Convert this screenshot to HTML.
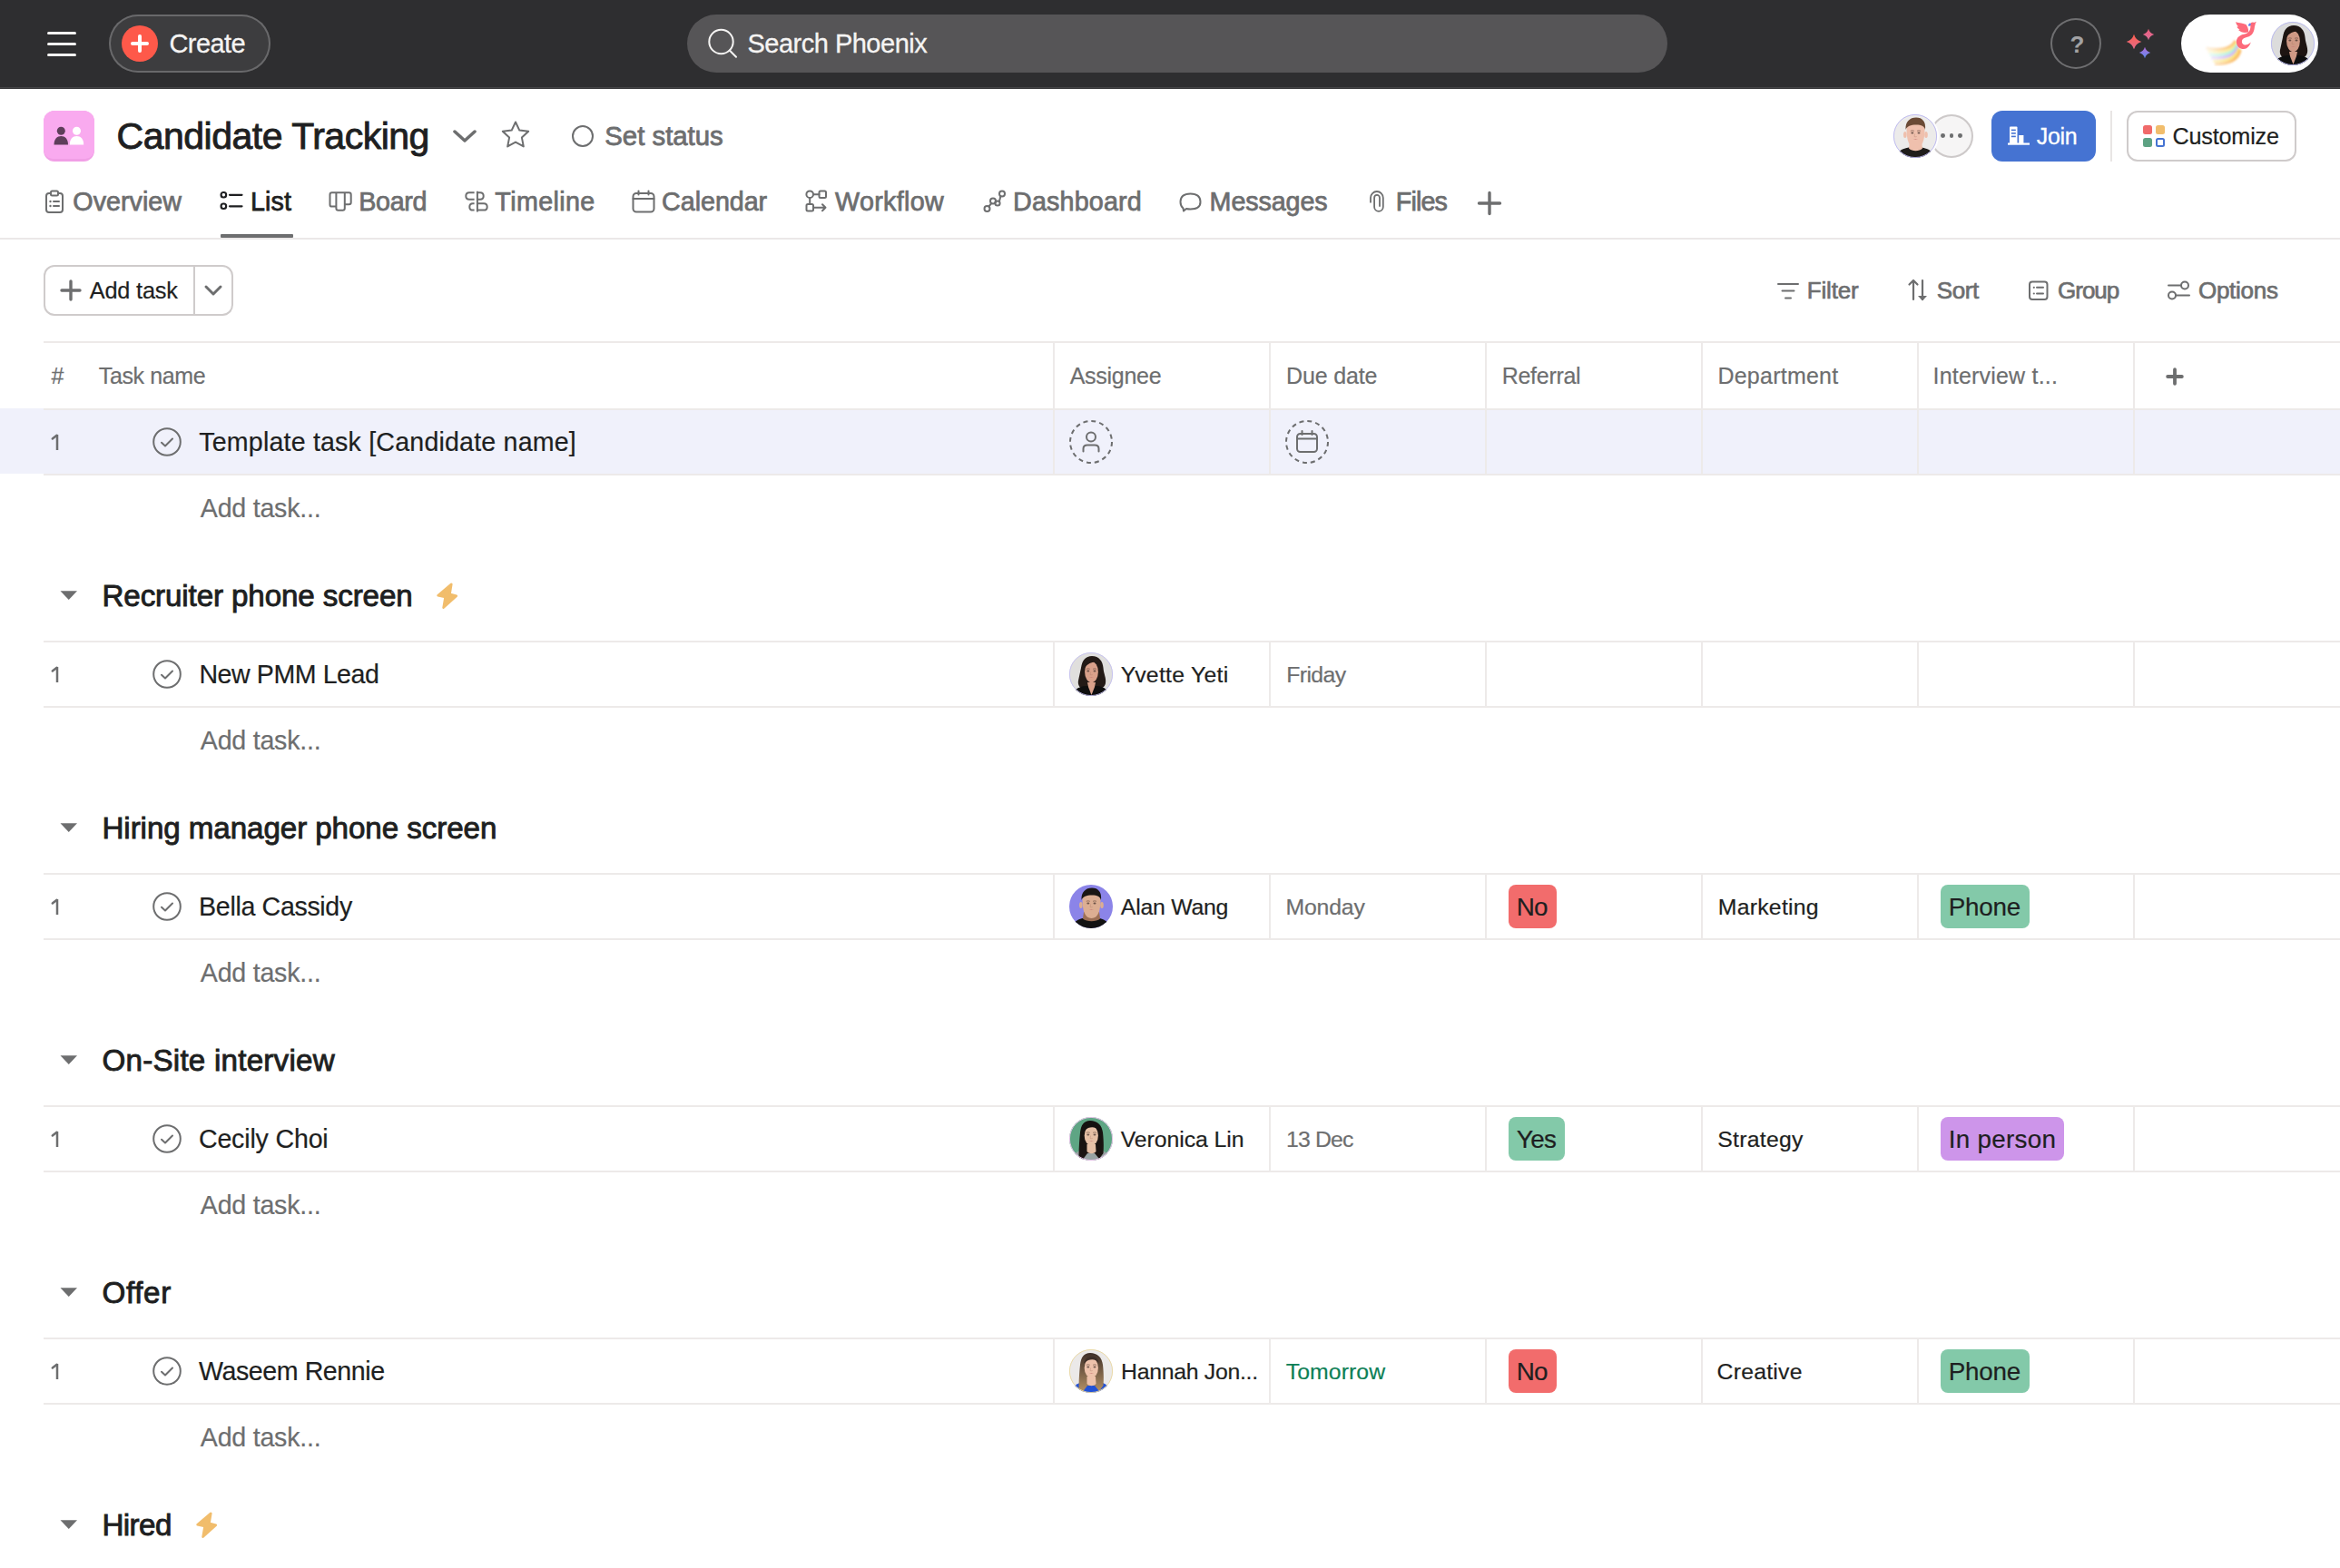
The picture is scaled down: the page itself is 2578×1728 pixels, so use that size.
<!DOCTYPE html><html><head><meta charset="utf-8"><style>
html,body{margin:0;padding:0;width:2578px;height:1728px;overflow:hidden;background:#fff;position:relative}
.t{position:absolute;white-space:nowrap;line-height:1;font-family:"Liberation Sans",sans-serif}
.b{position:absolute;box-sizing:border-box}
.s{position:absolute;overflow:visible}
</style></head><body>
<div class="b" style="left:0.00px;top:0.00px;width:2578.00px;height:96.00px;background:#2e2e30"></div>
<div class="b" style="left:0.00px;top:96.00px;width:2578.00px;height:1.00px;background:#444446"></div>
<div class="b" style="left:0.00px;top:97.00px;width:2578.00px;height:1.00px;background:#363638"></div>
<div class="b" style="left:52.00px;top:34.90px;width:32.00px;height:3.20px;background:#f5f4f3;border-radius:2px"></div>
<div class="b" style="left:52.00px;top:46.80px;width:32.00px;height:3.20px;background:#f5f4f3;border-radius:2px"></div>
<div class="b" style="left:52.00px;top:58.80px;width:32.00px;height:3.20px;background:#f5f4f3;border-radius:2px"></div>
<div class="b" style="left:120.00px;top:16.00px;width:178.00px;height:64.00px;background:#3d3d3f;border-radius:32px;box-shadow:inset 0 0 0 2px #69696b"></div>
<div class="b" style="left:134.00px;top:28.00px;width:40.00px;height:40.00px;background:#fe594a;border-radius:50%"></div>
<div class="b" style="left:144.00px;top:46.00px;width:20.00px;height:4.00px;background:#fff;border-radius:2px"></div>
<div class="b" style="left:152.00px;top:38.00px;width:4.00px;height:20.00px;background:#fff;border-radius:2px"></div>
<div class="t" style="left:186.53px;top:33.75px;font-size:29px;color:#f5f4f3;-webkit-text-stroke:0.3px #f5f4f3;letter-spacing:-0.590px;">Create</div>
<div class="b" style="left:757.00px;top:16.00px;width:1080.00px;height:64.00px;background:#565557;border-radius:32px"></div>
<svg class="s" style="left:778.00px;top:30.00px;" width="36" height="36" viewBox="0 0 36 36"><circle cx="16.5" cy="16" r="13.2" fill="none" stroke="#f5f4f3" stroke-width="2"/><line x1="25.8" y1="25.5" x2="33" y2="32.8" stroke="#f5f4f3" stroke-width="2" stroke-linecap="round"/></svg>
<div class="t" style="left:823.43px;top:33.75px;font-size:29px;color:#f5f4f3;-webkit-text-stroke:0.3px #f5f4f3;letter-spacing:-0.496px;">Search Phoenix</div>
<div class="b" style="left:2259.00px;top:20.00px;width:56.00px;height:56.00px;border-radius:50%;box-shadow:inset 0 0 0 2px #6f6f71"></div>
<div class="t" style="left:2280.50px;top:35.79px;font-size:26px;color:#a2a2a4;font-weight:700;">?</div>
<svg class="s" style="left:2330.00px;top:25.00px;" width="50" height="45" viewBox="0 0 50 45"><defs><linearGradient id="sg1" x1="0" y1="0" x2="0" y2="1"><stop offset="0" stop-color="#fd5f4d"/><stop offset="1" stop-color="#e46b8c"/></linearGradient><linearGradient id="sg2" x1="0" y1="0" x2="0" y2="1"><stop offset="0" stop-color="#ee5c7a"/><stop offset="1" stop-color="#d9709a"/></linearGradient><linearGradient id="sg3" x1="0" y1="0" x2="0" y2="1"><stop offset="0" stop-color="#b56bd8"/><stop offset="1" stop-color="#5b8cf0"/></linearGradient></defs><path d="M21 12.7 Q22.826 19.174 29.3 21 Q22.826 22.826 21 29.3 Q19.174 22.826 12.7 21 Q19.174 19.174 21 12.7Z" fill="url(#sg1)"/><path d="M37 6.8 Q38.364 11.636 43.2 13 Q38.364 14.364 37 19.2 Q35.636 14.364 30.8 13 Q35.636 11.636 37 6.8Z" fill="url(#sg2)"/><path d="M33 26.8 Q34.364 31.636 39.2 33 Q34.364 34.364 33 39.2 Q31.636 34.364 26.8 33 Q31.636 31.636 33 26.8Z" fill="url(#sg3)"/></svg>
<div class="b" style="left:2403.00px;top:16.00px;width:151.00px;height:64.00px;background:#fff;border-radius:32px"></div>
<svg class="s" style="left:2410.00px;top:16.00px;" width="90" height="64" viewBox="0 0 90 64"><defs><linearGradient id="tf" x1="15" y1="0" x2="52" y2="0" gradientUnits="userSpaceOnUse"><stop offset="0" stop-color="#fff" stop-opacity="0"/><stop offset="1" stop-color="#fff" stop-opacity="1"/></linearGradient><filter id="tbl" x="-20%" y="-20%" width="140%" height="140%"><feGaussianBlur stdDeviation="1.1"/></filter><mask id="tm"><rect x="0" y="0" width="90" height="64" fill="url(#tf)"/></mask></defs><g mask="url(#tm)"><g filter="url(#tbl)"><path d="M53.0 29.0 C49.0 37.0 38.0 41.0 20.0 37.0" stroke="#fbbf6e" stroke-width="3.5" fill="none"/><path d="M54.0 31.0 C50.4 39.6 39.4 43.8 22.0 40.5" stroke="#fde88a" stroke-width="3.5" fill="none"/><path d="M55.0 33.0 C51.8 42.2 40.8 46.6 24.0 44.0" stroke="#a9f1da" stroke-width="3.5" fill="none"/><path d="M56.0 35.0 C53.2 44.8 42.2 49.4 26.0 47.5" stroke="#cdb4f6" stroke-width="3.5" fill="none"/><path d="M57.0 37.0 C54.6 47.4 43.6 52.2 28.0 51.0" stroke="#fbe77e" stroke-width="3.5" fill="none"/><path d="M58.0 39.0 C56.0 50.0 45.0 55.0 30.0 54.5" stroke="#fbbf6e" stroke-width="3.5" fill="none"/></g></g><path d="M53 8.2 C57 9.5 62 9.5 64.5 11 C66 13 67.5 16 67 19.5 C63 20.5 59 20 56 17 L57.5 16.5 C55.5 15.5 54.5 14.5 54.5 13.5 L56 13.3 C54.5 12 53.8 10.5 53 8.2Z" fill="#fd6a7a"/><path d="M69.5 12 C69.5 17 68 20.5 62 21.8 C56 23 53.3 27 54 31.5 C54.6 35.5 58 38.2 62 38 C65.5 37.8 68.5 35 69.8 30.5 C67.5 32.8 65 33.8 62.8 33.4 C60.5 33 59.5 31 60 28.8 C60.6 26.6 62.8 25.6 66 24.8 C71 23.5 73.8 19.5 74 12 Z" fill="#fd6a7a"/><circle cx="71.8" cy="11.2" r="2.6" fill="#fd6a7a"/><path d="M72.5 9.2 L75.8 7.8 L74.2 11.2 Z" fill="#fd6a7a"/><ellipse cx="68.4" cy="11.2" rx="1.8" ry="1.1" transform="rotate(-50 68.4 11.2)" fill="#5b7ef0"/></svg>
<svg class="s" style="left:2502.00px;top:24.00px;" width="48" height="48" viewBox="0 0 48 48"><defs><clipPath id="ac1"><circle cx="24" cy="24" r="24"/></clipPath></defs><g clip-path="url(#ac1)"><rect width="48" height="48" fill="#dcdcdc"/><path d="M25 4 C33 4 37 10 37.5 17 C38 24 41 28 40 34 C39 38 36 40 33 40 L16 40 C12 40 9 36 10 31 C11 26 12 22 13 17 C14 9 18 4 25 4Z" fill="#1e1512"/><path d="M2 50 C4 41 10 38 18 37 L31 37 C38 38 44 41 46 50Z" fill="#0e0e0e"/><path d="M20 33 L29 33 L28 38 L24.5 47 L21 38Z" fill="#cf9985"/><ellipse cx="24.5" cy="21.5" rx="7.4" ry="11.5" fill="#cf9985"/><path d="M17 14 C19 9 27 8 32 12 C30 10 22 10 17 17Z" fill="#1e1512"/><ellipse cx="20.799999999999997" cy="20.5" rx="1.5" ry="0.9" fill="#4a3530" opacity="0.75"/><ellipse cx="28.0" cy="20.5" rx="1.5" ry="0.9" fill="#4a3530" opacity="0.75"/><path d="M18.799999999999997 18.3 Q20.799999999999997 17.3 22.799999999999997 18.3 M26.0 18.3 Q28.0 17.3 30.0 18.3" stroke="#5a4035" stroke-width="0.9" fill="none" opacity="0.6"/><path d="M21.4 26.8 Q24.4 29.1 27.4 26.8 Q24.4 27.9 21.4 26.8Z" fill="#c97a78" opacity="0.9"/><path d="M23.599999999999998 21.5 L23.0 24.5 Q24.4 25.1 25.7 24.5" stroke="#b07a66" stroke-width="0.7" fill="none" opacity="0.5"/></g><circle cx="24" cy="24" r="23.6" fill="none" stroke="#b8b8f0" stroke-width="0.9"/></svg>
<div class="b" style="left:48.00px;top:122.00px;width:56.00px;height:56.00px;background:#f19fe6;border-radius:12px"></div>
<div class="b" style="left:48.00px;top:122.00px;width:56.00px;height:53.00px;background:#f9aaef;border-radius:12px 12px 10px 10px"></div>
<svg class="s" style="left:59.00px;top:139.00px;" width="34" height="21" viewBox="0 0 34 21"><circle cx="8.3" cy="5.2" r="4.5" fill="#5e3e5b"/><path d="M0.5 20.5 C0.5 14 4 11 8.3 11 C12.6 11 16 14 16 20.5Z" fill="#5e3e5b"/><circle cx="25.5" cy="5.2" r="4.5" fill="#fff"/><path d="M17.8 20.5 C17.8 14 21.2 11 25.5 11 C29.8 11 33.2 14 33.2 20.5Z" fill="#fff"/></svg>
<div class="t" style="left:128.59px;top:130.29px;font-size:41px;color:#1e1f21;-webkit-text-stroke:0.9px #1e1f21;letter-spacing:-0.497px;">Candidate Tracking</div>
<svg class="s" style="left:498.00px;top:142.00px;" width="28" height="16" viewBox="0 0 28 16"><path d="M3 3 L14 13 L25 3" fill="none" stroke="#6d6e6f" stroke-width="3.5" stroke-linecap="round" stroke-linejoin="round"/></svg>
<svg class="s" style="left:550.00px;top:132.00px;" width="36" height="34" viewBox="0 0 36 34"><path d="M18 2.5 L22.3 11.6 L32.2 12.8 L24.9 19.6 L26.8 29.4 L18 24.6 L9.2 29.4 L11.1 19.6 L3.8 12.8 L13.7 11.6 Z" fill="none" stroke="#6d6e6f" stroke-width="2" stroke-linejoin="round"/></svg>
<svg class="s" style="left:628.00px;top:136.00px;" width="28" height="28" viewBox="0 0 28 28"><circle cx="14" cy="14" r="11" fill="none" stroke="#6d6e6f" stroke-width="2"/></svg>
<div class="t" style="left:666.28px;top:135.11px;font-size:29.4px;color:#6d6e6f;-webkit-text-stroke:0.8px #6d6e6f;letter-spacing:-0.022px;">Set status</div>
<div class="b" style="left:2126.00px;top:126.00px;width:48.00px;height:48.00px;background:#f6f5f5;border-radius:50%;box-shadow:inset 0 0 0 2px #cdc9c9"></div>
<div class="b" style="left:2138.20px;top:147.40px;width:4.80px;height:4.80px;background:#6d6e6f;border-radius:50%"></div>
<div class="b" style="left:2147.60px;top:147.40px;width:4.80px;height:4.80px;background:#6d6e6f;border-radius:50%"></div>
<div class="b" style="left:2157.10px;top:147.40px;width:4.80px;height:4.80px;background:#6d6e6f;border-radius:50%"></div>
<div class="b" style="left:2084.00px;top:124.00px;width:52.00px;height:52.00px;background:#fff;border-radius:50%"></div>
<svg class="s" style="left:2086.00px;top:126.00px;" width="48" height="48" viewBox="0 0 48 48"><defs><clipPath id="ac2"><circle cx="24" cy="24" r="24"/></clipPath></defs><g clip-path="url(#ac2)"><rect width="48" height="48" fill="#ecebea"/><path d="M1 50 C3 41 10 37.5 17 36.5 L31 36.5 C38 37.5 45 41 47 50Z" fill="#1f1d1b"/><path d="M18.0 30 L31.0 30 L32.0 37.5 C28.4 41 20.6 41 17.0  37.5Z" fill="#efc0ad"/><ellipse cx="12.8" cy="22.5" rx="1.8" ry="3.5" fill="#efc0ad"/><ellipse cx="36" cy="22.5" rx="1.8" ry="3.5" fill="#efc0ad"/><path d="M14.5 16 C14.5 28 17 37 24.5 37 C32 37 34.5 28 34.5 16 C34.5 12 30 10 24.5 10 C19 10 14.5 12 14.5 16Z" fill="#efc0ad"/><path d="M13.5 17 C13 8 18 3.5 25 3.5 C32 3.5 36 8 35 17 C34 13 31 11.5 25 11.5 C19 11.5 15 13 13.5 17Z" fill="#6a4a35"/><ellipse cx="20.799999999999997" cy="20.5" rx="1.5" ry="0.9" fill="#4a3530" opacity="0.75"/><ellipse cx="28.0" cy="20.5" rx="1.5" ry="0.9" fill="#4a3530" opacity="0.75"/><path d="M18.799999999999997 18.3 Q20.799999999999997 17.3 22.799999999999997 18.3 M26.0 18.3 Q28.0 17.3 30.0 18.3" stroke="#5a4035" stroke-width="0.9" fill="none" opacity="0.6"/><path d="M21.4 26.8 Q24.4 29.1 27.4 26.8 Q24.4 27.9 21.4 26.8Z" fill="#c97a78" opacity="0.9"/><path d="M23.599999999999998 21.5 L23.0 24.5 Q24.4 25.1 25.7 24.5" stroke="#b07a66" stroke-width="0.7" fill="none" opacity="0.5"/></g><circle cx="24" cy="24" r="23.6" fill="none" stroke="#b9b6f0" stroke-width="0.9"/></svg>
<div class="b" style="left:2194.00px;top:122.00px;width:115.00px;height:56.00px;background:#4573d2;border-radius:12px"></div>
<svg class="s" style="left:2211.00px;top:139.00px;" width="26" height="22" viewBox="0 0 26 22"><path d="M3 1.5 Q3 0.5 4 0.5 L10.5 0.5 Q11.5 0.5 11.5 1.5 L11.5 19 L3 19 Z" fill="#fff"/><rect x="4.8" y="3.6" width="5" height="1.6" fill="#4573d2"/><rect x="4.8" y="7.1" width="5" height="1.6" fill="#4573d2"/><rect x="4.8" y="10.6" width="5" height="1.6" fill="#4573d2"/><rect x="13.2" y="10" width="5.2" height="9" fill="#fff"/><rect x="1" y="18.5" width="24" height="2.2" fill="#fff"/></svg>
<div class="t" style="left:2243.73px;top:138.03px;font-size:25px;color:#ffffff;-webkit-text-stroke:0.3px #ffffff;letter-spacing:-0.283px;">Join</div>
<div class="b" style="left:2325.00px;top:122.00px;width:2.00px;height:56.00px;background:#e8e5e4"></div>
<div class="b" style="left:2343.00px;top:122.00px;width:187.00px;height:56.00px;border-radius:12px;box-shadow:inset 0 0 0 2px #cfcbcb;background:#fff"></div>
<div class="b" style="left:2361.00px;top:138.00px;width:10.00px;height:10.00px;background:#f06a6a;border-radius:2.5px"></div>
<div class="b" style="left:2375.00px;top:138.00px;width:10.00px;height:10.00px;background:#f1bd6c;border-radius:2.5px"></div>
<div class="b" style="left:2361.00px;top:152.00px;width:10.00px;height:10.00px;background:#5da283;border-radius:2.5px"></div>
<div class="b" style="left:2375.00px;top:152.00px;width:10.00px;height:10.00px;border:2px solid #4573d2;border-radius:2.5px"></div>
<div class="t" style="left:2393.42px;top:137.66px;font-size:25.2px;color:#1e1f21;-webkit-text-stroke:0.2px #1e1f21;letter-spacing:-0.175px;">Customize</div>
<svg class="s" style="left:49.00px;top:209.00px;" width="22" height="26" viewBox="0 0 22 26"><rect x="2" y="4" width="18" height="21" rx="3" stroke="#6d6e6f" fill="none" stroke-width="2" stroke-linecap="round" stroke-linejoin="round"/><rect x="7" y="1.5" width="8" height="5" rx="1.5" fill="#fff" stroke="#6d6e6f" fill="none" stroke-width="2" stroke-linecap="round" stroke-linejoin="round"/><circle cx="6.5" cy="13" r="1.2" fill="#6d6e6f"/><circle cx="6.5" cy="18" r="1.2" fill="#6d6e6f"/><line x1="10" y1="13" x2="16" y2="13" stroke="#6d6e6f" fill="none" stroke-width="2" stroke-linecap="round" stroke-linejoin="round"/><line x1="10" y1="18" x2="16" y2="18" stroke="#6d6e6f" fill="none" stroke-width="2" stroke-linecap="round" stroke-linejoin="round"/></svg>
<div class="t" style="left:80.33px;top:207.90px;font-size:28.7px;color:#6d6e6f;-webkit-text-stroke:0.75px #6d6e6f;letter-spacing:0.018px;">Overview</div>
<svg class="s" style="left:242.00px;top:210.00px;" width="27" height="22" viewBox="0 0 27 22"><g stroke="#1e1f21" fill="none" stroke-width="2.2" stroke-linecap="round"><rect x="1.6" y="2" width="5.5" height="5.5" rx="2.5"/><rect x="1.6" y="14.5" width="5.5" height="5.5" rx="2.5"/><line x1="11" y1="4.8" x2="24.5" y2="4.8"/><line x1="11" y1="17.3" x2="24.5" y2="17.3"/></g></svg>
<div class="t" style="left:275.93px;top:207.90px;font-size:28.7px;color:#1e1f21;-webkit-text-stroke:0.75px #1e1f21;letter-spacing:0.108px;">List</div>
<div class="b" style="left:243.00px;top:258.00px;width:80.00px;height:4.00px;background:#6d6e6f;border-radius:1px"></div>
<svg class="s" style="left:362.00px;top:210.00px;" width="26" height="24" viewBox="0 0 26 24"><path d="M1.5 4.5 Q1.5 2.3 3.7 2.3 H22.5 Q24.7 2.3 24.7 4.5 V13 Q24.7 15.2 22.5 15.2 H17.8 V19.5 Q17.8 21.7 15.6 21.7 H10.6 Q8.4 21.7 8.4 19.5 V17.6 H3.7 Q1.5 17.6 1.5 15.4 Z M8.4 2.3 V17.6 M17.8 2.3 V15.2" stroke="#6d6e6f" fill="none" stroke-width="2" stroke-linecap="round" stroke-linejoin="round"/></svg>
<div class="t" style="left:395.32px;top:207.90px;font-size:28.7px;color:#6d6e6f;-webkit-text-stroke:0.75px #6d6e6f;letter-spacing:-0.344px;">Board</div>
<svg class="s" style="left:512.00px;top:210.00px;" width="26" height="26" viewBox="0 0 26 26"><path d="M13.9 0.8 V23.5 M10.6 2.3 H5 Q1.3 2.3 1.3 6 Q1.3 9.7 5 9.7 H10.6 M13.9 2.3 H17 Q20.7 2.3 20.7 6 Q20.7 9.7 17 9.7 H13.9 M10.6 14.2 H9 Q5.3 14.2 5.3 17.9 Q5.3 21.6 9 21.6 H10.6 M13.9 14.2 H21 Q24.7 14.2 24.7 17.9 Q24.7 21.6 21 21.6 H13.9" stroke="#6d6e6f" fill="none" stroke-width="2" stroke-linecap="butt" stroke-linejoin="round"/></svg>
<div class="t" style="left:545.33px;top:207.90px;font-size:28.7px;color:#6d6e6f;-webkit-text-stroke:0.75px #6d6e6f;letter-spacing:0.375px;">Timeline</div>
<svg class="s" style="left:696.00px;top:209.00px;" width="26" height="26" viewBox="0 0 26 26"><rect x="1.5" y="4" width="23" height="20.5" rx="3.5" stroke="#6d6e6f" fill="none" stroke-width="2" stroke-linecap="round" stroke-linejoin="round"/><line x1="1.5" y1="10" x2="24.5" y2="10" stroke="#6d6e6f" fill="none" stroke-width="2" stroke-linecap="round" stroke-linejoin="round"/><line x1="7.5" y1="1.5" x2="7.5" y2="5.5" stroke="#6d6e6f" fill="none" stroke-width="2" stroke-linecap="round" stroke-linejoin="round"/><line x1="18.5" y1="1.5" x2="18.5" y2="5.5" stroke="#6d6e6f" fill="none" stroke-width="2" stroke-linecap="round" stroke-linejoin="round"/></svg>
<div class="t" style="left:729.12px;top:207.90px;font-size:28.7px;color:#6d6e6f;-webkit-text-stroke:0.75px #6d6e6f;letter-spacing:-0.054px;">Calendar</div>
<svg class="s" style="left:887.00px;top:209.00px;" width="26" height="26" viewBox="0 0 26 26"><circle cx="5.2" cy="5.2" r="3.8" stroke="#6d6e6f" fill="none" stroke-width="2" stroke-linecap="round" stroke-linejoin="round"/><rect x="15.5" y="1.5" width="7.5" height="7.5" rx="1.5" stroke="#6d6e6f" fill="none" stroke-width="2" stroke-linecap="round" stroke-linejoin="round"/><rect x="1.5" y="16" width="7.5" height="7.5" rx="1.5" stroke="#6d6e6f" fill="none" stroke-width="2" stroke-linecap="round" stroke-linejoin="round"/><path d="M9 5.2 H15.5 M5.2 9 V16 M9 19.8 H22.5 M19 16.2 L22.5 19.8 L19 23.3" stroke="#6d6e6f" fill="none" stroke-width="2" stroke-linecap="round" stroke-linejoin="round"/></svg>
<div class="t" style="left:920.03px;top:207.90px;font-size:28.7px;color:#6d6e6f;-webkit-text-stroke:0.75px #6d6e6f;letter-spacing:0.332px;">Workflow</div>
<svg class="s" style="left:1083.00px;top:209.00px;" width="26" height="26" viewBox="0 0 26 26"><circle cx="4.5" cy="21" r="3" stroke="#6d6e6f" fill="none" stroke-width="2" stroke-linecap="round" stroke-linejoin="round"/><circle cx="11" cy="12.5" r="3" stroke="#6d6e6f" fill="none" stroke-width="2" stroke-linecap="round" stroke-linejoin="round"/><circle cx="21" cy="4.5" r="3" stroke="#6d6e6f" fill="none" stroke-width="2" stroke-linecap="round" stroke-linejoin="round"/><circle cx="16" cy="15" r="2.6" stroke="#6d6e6f" fill="none" stroke-width="2" stroke-linecap="round" stroke-linejoin="round"/><path d="M6.3 18.6 L9.3 15 M13.8 13.6 L13.6 13.5 M18 12.8 L19.4 7.2 M13.7 13.6 L13.5 13.6" stroke="#6d6e6f" fill="none" stroke-width="2" stroke-linecap="round" stroke-linejoin="round"/></svg>
<div class="t" style="left:1116.12px;top:207.90px;font-size:28.7px;color:#6d6e6f;-webkit-text-stroke:0.75px #6d6e6f;letter-spacing:0.166px;">Dashboard</div>
<svg class="s" style="left:1299.00px;top:210.00px;" width="26" height="26" viewBox="0 0 26 26"><path d="M4.5 19.5 Q1.5 17 1.5 12.5 Q1.5 3.5 12.5 3.5 Q23.5 3.5 23.5 12.5 Q23.5 20.5 12.5 20.5 Q10 20.5 8 20 L5 22.5 Z" stroke="#6d6e6f" fill="none" stroke-width="2" stroke-linecap="round" stroke-linejoin="round"/></svg>
<div class="t" style="left:1332.62px;top:207.90px;font-size:28.7px;color:#6d6e6f;-webkit-text-stroke:0.75px #6d6e6f;letter-spacing:-0.096px;">Messages</div>
<svg class="s" style="left:1507.00px;top:208.00px;" width="20" height="28" viewBox="0 0 20 28"><path d="M3 15.6 V9.9 A6.9 6.9 0 0 1 16.8 9.9 V20 A4.85 4.85 0 0 1 7.1 20 V9.9 A2.95 2.95 0 0 1 13 9.9 V19.7" stroke="#6d6e6f" fill="none" stroke-width="1.8" stroke-linecap="butt"/></svg>
<div class="t" style="left:1537.83px;top:207.90px;font-size:28.7px;color:#6d6e6f;-webkit-text-stroke:0.75px #6d6e6f;letter-spacing:-0.894px;">Files</div>
<svg class="s" style="left:1627.00px;top:210.00px;" width="28" height="28" viewBox="0 0 28 28"><path d="M14 2.5 V25.5 M2.5 14 H25.5" stroke="#6d6e6f" stroke-width="3.4" stroke-linecap="round"/></svg>
<div class="b" style="left:0.00px;top:262.00px;width:2578.00px;height:2.00px;background:#ebe8e8"></div>
<div class="b" style="left:48.00px;top:292.00px;width:209.00px;height:56.00px;border-radius:12px;box-shadow:inset 0 0 0 2px #cfcbcb"></div>
<div class="b" style="left:213.00px;top:292.00px;width:2.00px;height:56.00px;background:#cfcbcb"></div>
<svg class="s" style="left:66.00px;top:308.00px;" width="24" height="24" viewBox="0 0 24 24"><path d="M12 2 V22 M2 12 H22" stroke="#6d6e6f" stroke-width="3.4" stroke-linecap="round"/></svg>
<div class="t" style="left:98.82px;top:307.58px;font-size:25.3px;color:#1e1f21;-webkit-text-stroke:0.2px #1e1f21;letter-spacing:-0.200px;">Add task</div>
<svg class="s" style="left:224.00px;top:313.00px;" width="22" height="14" viewBox="0 0 22 14"><path d="M3 3 L11 11 L19 3" fill="none" stroke="#6d6e6f" stroke-width="3" stroke-linecap="round" stroke-linejoin="round"/></svg>
<svg class="s" style="left:1956.00px;top:310.00px;" width="28" height="22" viewBox="0 0 28 22"><path d="M3 3 H25 M7.5 10.5 H20.5 M11 18.5 H17" stroke="#6d6e6f" fill="none" stroke-width="2" stroke-linecap="round" stroke-linejoin="round"/></svg>
<div class="t" style="left:1990.67px;top:307.49px;font-size:26px;color:#6d6e6f;-webkit-text-stroke:0.7px #6d6e6f;letter-spacing:-0.130px;">Filter</div>
<svg class="s" style="left:2101.00px;top:306.00px;" width="24" height="28" viewBox="0 0 24 28"><g stroke="#6d6e6f" fill="none" stroke-width="2.2" stroke-linecap="round" stroke-linejoin="round"><path d="M7 24 V3 M2.5 7.5 L7 3 L11.5 7.5"/><path d="M17 3 V24"/></g><path d="M12 20 L17 25.5 L22 20 Z" fill="#6d6e6f"/></svg>
<div class="t" style="left:2133.77px;top:307.49px;font-size:26px;color:#6d6e6f;-webkit-text-stroke:0.7px #6d6e6f;letter-spacing:-0.417px;">Sort</div>
<svg class="s" style="left:2234.00px;top:308.00px;" width="24" height="24" viewBox="0 0 24 24"><rect x="2" y="2.5" width="19.5" height="19.5" rx="3" stroke="#6d6e6f" fill="none" stroke-width="2" stroke-linecap="round" stroke-linejoin="round"/><circle cx="6.8" cy="8.8" r="1.1" fill="#6d6e6f"/><circle cx="6.8" cy="15.5" r="1.1" fill="#6d6e6f"/><line x1="10" y1="8.8" x2="17" y2="8.8" stroke="#6d6e6f" fill="none" stroke-width="2" stroke-linecap="round" stroke-linejoin="round"/><line x1="10" y1="15.5" x2="17" y2="15.5" stroke="#6d6e6f" fill="none" stroke-width="2" stroke-linecap="round" stroke-linejoin="round"/></svg>
<div class="t" style="left:2267.07px;top:307.49px;font-size:26px;color:#6d6e6f;-webkit-text-stroke:0.7px #6d6e6f;letter-spacing:-1.012px;">Group</div>
<svg class="s" style="left:2387.00px;top:308.00px;" width="28" height="24" viewBox="0 0 28 24"><circle cx="20" cy="6.5" r="4" stroke="#6d6e6f" fill="none" stroke-width="2" stroke-linecap="round" stroke-linejoin="round"/><circle cx="6" cy="17.5" r="4" stroke="#6d6e6f" fill="none" stroke-width="2" stroke-linecap="round" stroke-linejoin="round"/><line x1="2" y1="6.5" x2="16" y2="6.5" stroke="#6d6e6f" fill="none" stroke-width="2" stroke-linecap="round" stroke-linejoin="round"/><line x1="10" y1="17.5" x2="25" y2="17.5" stroke="#6d6e6f" fill="none" stroke-width="2" stroke-linecap="round" stroke-linejoin="round"/></svg>
<div class="t" style="left:2421.97px;top:307.49px;font-size:26px;color:#6d6e6f;-webkit-text-stroke:0.7px #6d6e6f;letter-spacing:-0.275px;">Options</div>
<div class="b" style="left:48.00px;top:376.00px;width:2530.00px;height:2.00px;background:#edeae9"></div>
<div class="b" style="left:1160.00px;top:377.00px;width:2.00px;height:74.00px;background:#edeae9"></div>
<div class="b" style="left:1398.00px;top:377.00px;width:2.00px;height:74.00px;background:#edeae9"></div>
<div class="b" style="left:1636.00px;top:377.00px;width:2.00px;height:74.00px;background:#edeae9"></div>
<div class="b" style="left:1874.00px;top:377.00px;width:2.00px;height:74.00px;background:#edeae9"></div>
<div class="b" style="left:2112.00px;top:377.00px;width:2.00px;height:74.00px;background:#edeae9"></div>
<div class="b" style="left:2350.00px;top:377.00px;width:2.00px;height:74.00px;background:#edeae9"></div>
<div class="t" style="left:56.40px;top:401.83px;font-size:25px;color:#6d6e6f;-webkit-text-stroke:0.2px #6d6e6f;">#</div>
<div class="t" style="left:108.82px;top:401.83px;font-size:25px;color:#6d6e6f;-webkit-text-stroke:0.2px #6d6e6f;letter-spacing:-0.387px;">Task name</div>
<div class="t" style="left:1178.72px;top:401.83px;font-size:25px;color:#6d6e6f;-webkit-text-stroke:0.2px #6d6e6f;letter-spacing:-0.286px;">Assignee</div>
<div class="t" style="left:1417.12px;top:401.83px;font-size:25px;color:#6d6e6f;-webkit-text-stroke:0.2px #6d6e6f;letter-spacing:-0.157px;">Due date</div>
<div class="t" style="left:1654.72px;top:401.83px;font-size:25px;color:#6d6e6f;-webkit-text-stroke:0.2px #6d6e6f;letter-spacing:-0.286px;">Referral</div>
<div class="t" style="left:1892.42px;top:401.83px;font-size:25px;color:#6d6e6f;-webkit-text-stroke:0.2px #6d6e6f;letter-spacing:0.244px;">Department</div>
<div class="t" style="left:2129.52px;top:401.83px;font-size:25px;color:#6d6e6f;-webkit-text-stroke:0.2px #6d6e6f;letter-spacing:0.200px;">Interview t...</div>
<svg class="s" style="left:2383.50px;top:402.50px;" width="24" height="24" viewBox="0 0 24 24"><path d="M12 4.15 V19.85 M4.15 12 H19.85" stroke="#6d6e6f" stroke-width="3.8" stroke-linecap="round"/></svg>
<div class="b" style="left:0.00px;top:450.00px;width:2578.00px;height:72.00px;background:#f0f1fb"></div>
<div class="b" style="left:48.00px;top:450.00px;width:2530.00px;height:2.00px;background:#edeae9"></div>
<div class="b" style="left:48.00px;top:522.00px;width:2530.00px;height:2.00px;background:#edeae9"></div>
<div class="b" style="left:1160.00px;top:451.00px;width:2.00px;height:72.00px;background:#edeae9"></div>
<div class="b" style="left:1398.00px;top:451.00px;width:2.00px;height:72.00px;background:#edeae9"></div>
<div class="b" style="left:1636.00px;top:451.00px;width:2.00px;height:72.00px;background:#edeae9"></div>
<div class="b" style="left:1874.00px;top:451.00px;width:2.00px;height:72.00px;background:#edeae9"></div>
<div class="b" style="left:2112.00px;top:451.00px;width:2.00px;height:72.00px;background:#edeae9"></div>
<div class="b" style="left:2350.00px;top:451.00px;width:2.00px;height:72.00px;background:#edeae9"></div>
<svg class="s" style="left:55.00px;top:477.00px;" width="12" height="21" viewBox="0 0 12 21"><path d="M8 2 V19" stroke="#6d6e6f" stroke-width="2.5"/><path d="M2.8 6.4 L7.6 2.8" stroke="#6d6e6f" stroke-width="2.5" stroke-linecap="round"/></svg>
<svg class="s" style="left:167.00px;top:470.00px;" width="34" height="34" viewBox="0 0 34 34"><circle cx="17" cy="17" r="14.8" fill="none" stroke="#6d6e6f" stroke-width="2"/><path d="M11 17.8 L15 21.5 L23 13.5" fill="none" stroke="#6d6e6f" stroke-width="2" stroke-linecap="round" stroke-linejoin="round"/></svg>
<div class="t" style="left:220.82px;top:545.98px;font-size:28.6px;color:#6d6e6f;-webkit-text-stroke:0.2px #6d6e6f;letter-spacing:-0.230px;">Add task...</div>
<div class="t" style="left:219.22px;top:472.98px;font-size:28.6px;color:#1e1f21;-webkit-text-stroke:0.2px #1e1f21;letter-spacing:0.190px;">Template task [Candidate name]</div>
<svg class="s" style="left:1177.00px;top:462.00px;" width="50" height="50" viewBox="0 0 50 50"><circle cx="25" cy="25" r="23" fill="none" stroke="#6d6e6f" stroke-width="2" stroke-dasharray="5 4"/><circle cx="25" cy="19.5" r="5" fill="none" stroke="#6d6e6f" stroke-width="2"/><path d="M16.5 35.5 V32.5 Q16.5 28.5 21 28.5 H29 Q33.5 28.5 33.5 32.5 V35.5" fill="none" stroke="#6d6e6f" stroke-width="2" stroke-linecap="round"/></svg>
<svg class="s" style="left:1415.00px;top:462.00px;" width="50" height="50" viewBox="0 0 50 50"><circle cx="25" cy="25" r="23" fill="none" stroke="#6d6e6f" stroke-width="2" stroke-dasharray="5 4"/><rect x="14" y="16" width="22" height="20" rx="3.5" fill="none" stroke="#6d6e6f" stroke-width="2"/><line x1="14" y1="21.5" x2="36" y2="21.5" stroke="#6d6e6f" stroke-width="2"/><line x1="19.5" y1="13" x2="19.5" y2="17" stroke="#6d6e6f" stroke-width="2" stroke-linecap="round"/><line x1="30.5" y1="13" x2="30.5" y2="17" stroke="#6d6e6f" stroke-width="2" stroke-linecap="round"/></svg>
<svg class="s" style="left:65.00px;top:649.00px;" width="22" height="14" viewBox="0 0 22 14"><path d="M1.5 2.2 H20 L10.75 12 Z" fill="#6d6e6f"/></svg>
<div class="t" style="left:112.49px;top:639.89px;font-size:33.2px;color:#1e1f21;-webkit-text-stroke:0.9px #1e1f21;letter-spacing:-0.131px;">Recruiter phone screen</div>
<div class="b" style="left:48.00px;top:706.00px;width:2530.00px;height:2.00px;background:#edeae9"></div>
<div class="b" style="left:48.00px;top:778.00px;width:2530.00px;height:2.00px;background:#edeae9"></div>
<div class="b" style="left:1160.00px;top:707.00px;width:2.00px;height:72.00px;background:#edeae9"></div>
<div class="b" style="left:1398.00px;top:707.00px;width:2.00px;height:72.00px;background:#edeae9"></div>
<div class="b" style="left:1636.00px;top:707.00px;width:2.00px;height:72.00px;background:#edeae9"></div>
<div class="b" style="left:1874.00px;top:707.00px;width:2.00px;height:72.00px;background:#edeae9"></div>
<div class="b" style="left:2112.00px;top:707.00px;width:2.00px;height:72.00px;background:#edeae9"></div>
<div class="b" style="left:2350.00px;top:707.00px;width:2.00px;height:72.00px;background:#edeae9"></div>
<svg class="s" style="left:55.00px;top:733.00px;" width="12" height="21" viewBox="0 0 12 21"><path d="M8 2 V19" stroke="#6d6e6f" stroke-width="2.5"/><path d="M2.8 6.4 L7.6 2.8" stroke="#6d6e6f" stroke-width="2.5" stroke-linecap="round"/></svg>
<svg class="s" style="left:167.00px;top:726.00px;" width="34" height="34" viewBox="0 0 34 34"><circle cx="17" cy="17" r="14.8" fill="none" stroke="#6d6e6f" stroke-width="2"/><path d="M11 17.8 L15 21.5 L23 13.5" fill="none" stroke="#6d6e6f" stroke-width="2" stroke-linecap="round" stroke-linejoin="round"/></svg>
<div class="t" style="left:220.82px;top:801.98px;font-size:28.6px;color:#6d6e6f;-webkit-text-stroke:0.2px #6d6e6f;letter-spacing:-0.230px;">Add task...</div>
<div class="t" style="left:219.42px;top:728.98px;font-size:28.6px;color:#1e1f21;-webkit-text-stroke:0.2px #1e1f21;letter-spacing:-0.445px;">New PMM Lead</div>
<svg class="s" style="left:1178.00px;top:719.00px;" width="48" height="48" viewBox="0 0 48 48"><defs><clipPath id="ac3"><circle cx="24" cy="24" r="24"/></clipPath></defs><g clip-path="url(#ac3)"><rect width="48" height="48" fill="#e0dfdd"/><path d="M25 4 C33 4 37 10 37.5 17 C38 24 41 28 40 34 C39 38 36 40 33 40 L16 40 C12 40 9 36 10 31 C11 26 12 22 13 17 C14 9 18 4 25 4Z" fill="#231a16"/><path d="M2 50 C4 41 10 38 18 37 L31 37 C38 38 44 41 46 50Z" fill="#0e0e0e"/><path d="M20 33 L29 33 L28 38 L24.5 47 L21 38Z" fill="#d9a08a"/><ellipse cx="24.5" cy="21.5" rx="7.4" ry="11.5" fill="#d9a08a"/><path d="M17 14 C19 9 27 8 32 12 C30 10 22 10 17 17Z" fill="#231a16"/><ellipse cx="20.799999999999997" cy="20.5" rx="1.5" ry="0.9" fill="#4a3530" opacity="0.75"/><ellipse cx="28.0" cy="20.5" rx="1.5" ry="0.9" fill="#4a3530" opacity="0.75"/><path d="M18.799999999999997 18.3 Q20.799999999999997 17.3 22.799999999999997 18.3 M26.0 18.3 Q28.0 17.3 30.0 18.3" stroke="#5a4035" stroke-width="0.9" fill="none" opacity="0.6"/><path d="M21.4 26.8 Q24.4 29.1 27.4 26.8 Q24.4 27.9 21.4 26.8Z" fill="#c97a78" opacity="0.9"/><path d="M23.599999999999998 21.5 L23.0 24.5 Q24.4 25.1 25.7 24.5" stroke="#b07a66" stroke-width="0.7" fill="none" opacity="0.5"/></g><circle cx="24" cy="24" r="23.6" fill="none" stroke="#c4bff0" stroke-width="0.9"/></svg>
<div class="t" style="left:1234.72px;top:732.10px;font-size:24.8px;color:#1e1f21;-webkit-text-stroke:0.2px #1e1f21;letter-spacing:0.270px;">Yvette Yeti</div>
<div class="t" style="left:1417.22px;top:732.10px;font-size:24.8px;color:#6d6e6f;-webkit-text-stroke:0.2px #6d6e6f;letter-spacing:-0.600px;">Friday</div>
<svg class="s" style="left:65.00px;top:905.00px;" width="22" height="14" viewBox="0 0 22 14"><path d="M1.5 2.2 H20 L10.75 12 Z" fill="#6d6e6f"/></svg>
<div class="t" style="left:112.49px;top:895.89px;font-size:33.2px;color:#1e1f21;-webkit-text-stroke:0.9px #1e1f21;letter-spacing:-0.090px;">Hiring manager phone screen</div>
<div class="b" style="left:48.00px;top:962.00px;width:2530.00px;height:2.00px;background:#edeae9"></div>
<div class="b" style="left:48.00px;top:1034.00px;width:2530.00px;height:2.00px;background:#edeae9"></div>
<div class="b" style="left:1160.00px;top:963.00px;width:2.00px;height:72.00px;background:#edeae9"></div>
<div class="b" style="left:1398.00px;top:963.00px;width:2.00px;height:72.00px;background:#edeae9"></div>
<div class="b" style="left:1636.00px;top:963.00px;width:2.00px;height:72.00px;background:#edeae9"></div>
<div class="b" style="left:1874.00px;top:963.00px;width:2.00px;height:72.00px;background:#edeae9"></div>
<div class="b" style="left:2112.00px;top:963.00px;width:2.00px;height:72.00px;background:#edeae9"></div>
<div class="b" style="left:2350.00px;top:963.00px;width:2.00px;height:72.00px;background:#edeae9"></div>
<svg class="s" style="left:55.00px;top:989.00px;" width="12" height="21" viewBox="0 0 12 21"><path d="M8 2 V19" stroke="#6d6e6f" stroke-width="2.5"/><path d="M2.8 6.4 L7.6 2.8" stroke="#6d6e6f" stroke-width="2.5" stroke-linecap="round"/></svg>
<svg class="s" style="left:167.00px;top:982.00px;" width="34" height="34" viewBox="0 0 34 34"><circle cx="17" cy="17" r="14.8" fill="none" stroke="#6d6e6f" stroke-width="2"/><path d="M11 17.8 L15 21.5 L23 13.5" fill="none" stroke="#6d6e6f" stroke-width="2" stroke-linecap="round" stroke-linejoin="round"/></svg>
<div class="t" style="left:220.82px;top:1057.98px;font-size:28.6px;color:#6d6e6f;-webkit-text-stroke:0.2px #6d6e6f;letter-spacing:-0.230px;">Add task...</div>
<div class="t" style="left:219.12px;top:984.98px;font-size:28.6px;color:#1e1f21;-webkit-text-stroke:0.2px #1e1f21;letter-spacing:-0.342px;">Bella Cassidy</div>
<svg class="s" style="left:1178.00px;top:975.00px;" width="48" height="48" viewBox="0 0 48 48"><defs><clipPath id="ac4"><circle cx="24" cy="24" r="24"/></clipPath></defs><g clip-path="url(#ac4)"><rect width="48" height="48" fill="#8b84e8"/><path d="M1 50 C3 41 10 37.5 17 36.5 L31 36.5 C38 37.5 45 41 47 50Z" fill="#121212"/><path d="M16.0 30 L33.0 30 L34.0 37.5 C29.6 41 19.4 41 15.0  37.5Z" fill="#9c6f55"/><ellipse cx="12.8" cy="22.5" rx="1.8" ry="3.5" fill="#dcae92"/><ellipse cx="36" cy="22.5" rx="1.8" ry="3.5" fill="#dcae92"/><path d="M14.5 16 C14.5 28 17 37 24.5 37 C32 37 34.5 28 34.5 16 C34.5 12 30 10 24.5 10 C19 10 14.5 12 14.5 16Z" fill="#dcae92"/><path d="M13.5 17 C13 8 18 3.5 25 3.5 C32 3.5 36 8 35 17 C34 13 31 11.5 25 11.5 C19 11.5 15 13 13.5 17Z" fill="#1a1614"/><ellipse cx="20.799999999999997" cy="20.5" rx="1.5" ry="0.9" fill="#4a3530" opacity="0.75"/><ellipse cx="28.0" cy="20.5" rx="1.5" ry="0.9" fill="#4a3530" opacity="0.75"/><path d="M18.799999999999997 18.3 Q20.799999999999997 17.3 22.799999999999997 18.3 M26.0 18.3 Q28.0 17.3 30.0 18.3" stroke="#5a4035" stroke-width="0.9" fill="none" opacity="0.6"/><path d="M21.4 26.8 Q24.4 29.1 27.4 26.8 Q24.4 27.9 21.4 26.8Z" fill="#c97a78" opacity="0.9"/><path d="M23.599999999999998 21.5 L23.0 24.5 Q24.4 25.1 25.7 24.5" stroke="#b07a66" stroke-width="0.7" fill="none" opacity="0.5"/></g></svg>
<div class="t" style="left:1234.82px;top:988.10px;font-size:24.8px;color:#1e1f21;-webkit-text-stroke:0.2px #1e1f21;letter-spacing:-0.225px;">Alan Wang</div>
<div class="t" style="left:1416.52px;top:988.10px;font-size:24.8px;color:#6d6e6f;-webkit-text-stroke:0.2px #6d6e6f;letter-spacing:-0.180px;">Monday</div>
<div class="b" style="left:1662.00px;top:975.00px;width:53.00px;height:48.00px;background:#f26c6c;border-radius:8px"></div>
<div class="t" style="left:1670.82px;top:985.76px;font-size:27.8px;color:#1e1f21;-webkit-text-stroke:0.2px #1e1f21;letter-spacing:-0.900px;">No</div>
<div class="t" style="left:1892.82px;top:988.10px;font-size:24.8px;color:#1e1f21;-webkit-text-stroke:0.2px #1e1f21;letter-spacing:0.238px;">Marketing</div>
<div class="b" style="left:2138.00px;top:975.00px;width:98.00px;height:48.00px;background:#83c9a9;border-radius:8px"></div>
<div class="t" style="left:2146.82px;top:985.76px;font-size:27.8px;color:#1e1f21;-webkit-text-stroke:0.2px #1e1f21;letter-spacing:-0.275px;">Phone</div>
<svg class="s" style="left:65.00px;top:1161.00px;" width="22" height="14" viewBox="0 0 22 14"><path d="M1.5 2.2 H20 L10.75 12 Z" fill="#6d6e6f"/></svg>
<div class="t" style="left:112.49px;top:1151.89px;font-size:33.2px;color:#1e1f21;-webkit-text-stroke:0.9px #1e1f21;letter-spacing:0.216px;">On-Site interview</div>
<div class="b" style="left:48.00px;top:1218.00px;width:2530.00px;height:2.00px;background:#edeae9"></div>
<div class="b" style="left:48.00px;top:1290.00px;width:2530.00px;height:2.00px;background:#edeae9"></div>
<div class="b" style="left:1160.00px;top:1219.00px;width:2.00px;height:72.00px;background:#edeae9"></div>
<div class="b" style="left:1398.00px;top:1219.00px;width:2.00px;height:72.00px;background:#edeae9"></div>
<div class="b" style="left:1636.00px;top:1219.00px;width:2.00px;height:72.00px;background:#edeae9"></div>
<div class="b" style="left:1874.00px;top:1219.00px;width:2.00px;height:72.00px;background:#edeae9"></div>
<div class="b" style="left:2112.00px;top:1219.00px;width:2.00px;height:72.00px;background:#edeae9"></div>
<div class="b" style="left:2350.00px;top:1219.00px;width:2.00px;height:72.00px;background:#edeae9"></div>
<svg class="s" style="left:55.00px;top:1245.00px;" width="12" height="21" viewBox="0 0 12 21"><path d="M8 2 V19" stroke="#6d6e6f" stroke-width="2.5"/><path d="M2.8 6.4 L7.6 2.8" stroke="#6d6e6f" stroke-width="2.5" stroke-linecap="round"/></svg>
<svg class="s" style="left:167.00px;top:1238.00px;" width="34" height="34" viewBox="0 0 34 34"><circle cx="17" cy="17" r="14.8" fill="none" stroke="#6d6e6f" stroke-width="2"/><path d="M11 17.8 L15 21.5 L23 13.5" fill="none" stroke="#6d6e6f" stroke-width="2" stroke-linecap="round" stroke-linejoin="round"/></svg>
<div class="t" style="left:220.82px;top:1313.98px;font-size:28.6px;color:#6d6e6f;-webkit-text-stroke:0.2px #6d6e6f;letter-spacing:-0.230px;">Add task...</div>
<div class="t" style="left:218.92px;top:1240.98px;font-size:28.6px;color:#1e1f21;-webkit-text-stroke:0.2px #1e1f21;letter-spacing:-0.180px;">Cecily Choi</div>
<svg class="s" style="left:1178.00px;top:1231.00px;" width="48" height="48" viewBox="0 0 48 48"><defs><clipPath id="ac5"><circle cx="24" cy="24" r="24"/></clipPath></defs><g clip-path="url(#ac5)"><defs><linearGradient id="hg5" x1="0" y1="0" x2="0" y2="1"><stop offset="0" stop-color="#141110"/><stop offset="1" stop-color="#1d1512"/></linearGradient></defs><rect width="48" height="48" fill="#5ea584"/><path d="M1 52 C2 42 8 37 17 35.5 L32 35.5 C40 37 46 42 47 52Z" fill="#98a3a3"/><path d="M23 4 C31 4 36 9 37 17 C38 26 38 33 37.5 40 L33 46 L28 40 L20 40 L14 48 L10.5 46 C10.5 36 11 26 12 17 C13 9 16 4 23 4Z" fill="url(#hg5)"/><path d="M19.5 30 L29 30 L29.5 38 C27 41 22 41 19.5 38Z" fill="#e6c0a6"/><ellipse cx="24.3" cy="20.5" rx="7.6" ry="11" fill="#e6c0a6"/><path d="M16 16 C17 9 22 7.5 26 8 C30 8.5 32 11 32.5 15 C30 11 25 10.5 21 12 C18.5 13 17 15 16 16Z" fill="#141110"/><ellipse cx="20.799999999999997" cy="19.5" rx="1.5" ry="0.9" fill="#4a3530" opacity="0.75"/><ellipse cx="28.0" cy="19.5" rx="1.5" ry="0.9" fill="#4a3530" opacity="0.75"/><path d="M18.799999999999997 17.3 Q20.799999999999997 16.3 22.799999999999997 17.3 M26.0 17.3 Q28.0 16.3 30.0 17.3" stroke="#5a4035" stroke-width="0.9" fill="none" opacity="0.6"/><path d="M21.4 25.8 Q24.4 28.1 27.4 25.8 Q24.4 26.9 21.4 25.8Z" fill="#c97a78" opacity="0.9"/><path d="M23.599999999999998 20.5 L23.0 23.5 Q24.4 24.1 25.7 23.5" stroke="#b07a66" stroke-width="0.7" fill="none" opacity="0.5"/></g><circle cx="24" cy="24" r="23.6" fill="none" stroke="#f0c6f0" stroke-width="0.9"/></svg>
<div class="t" style="left:1234.72px;top:1244.10px;font-size:24.8px;color:#1e1f21;-webkit-text-stroke:0.2px #1e1f21;letter-spacing:-0.055px;">Veronica Lin</div>
<div class="t" style="left:1417.02px;top:1244.10px;font-size:24.8px;color:#6d6e6f;-webkit-text-stroke:0.2px #6d6e6f;letter-spacing:-0.820px;">13 Dec</div>
<div class="b" style="left:1662.00px;top:1231.00px;width:62.00px;height:48.00px;background:#83c9a9;border-radius:8px"></div>
<div class="t" style="left:1670.82px;top:1241.76px;font-size:27.8px;color:#1e1f21;-webkit-text-stroke:0.2px #1e1f21;letter-spacing:-0.650px;">Yes</div>
<div class="t" style="left:1892.32px;top:1244.10px;font-size:24.8px;color:#1e1f21;-webkit-text-stroke:0.2px #1e1f21;letter-spacing:0.257px;">Strategy</div>
<div class="b" style="left:2138.00px;top:1231.00px;width:136.00px;height:48.00px;background:#cd95ea;border-radius:8px"></div>
<div class="t" style="left:2146.82px;top:1241.76px;font-size:27.8px;color:#1e1f21;-webkit-text-stroke:0.2px #1e1f21;letter-spacing:0.288px;">In person</div>
<svg class="s" style="left:65.00px;top:1417.00px;" width="22" height="14" viewBox="0 0 22 14"><path d="M1.5 2.2 H20 L10.75 12 Z" fill="#6d6e6f"/></svg>
<div class="t" style="left:112.49px;top:1407.89px;font-size:33.2px;color:#1e1f21;-webkit-text-stroke:0.9px #1e1f21;letter-spacing:0.637px;">Offer</div>
<div class="b" style="left:48.00px;top:1474.00px;width:2530.00px;height:2.00px;background:#edeae9"></div>
<div class="b" style="left:48.00px;top:1546.00px;width:2530.00px;height:2.00px;background:#edeae9"></div>
<div class="b" style="left:1160.00px;top:1475.00px;width:2.00px;height:72.00px;background:#edeae9"></div>
<div class="b" style="left:1398.00px;top:1475.00px;width:2.00px;height:72.00px;background:#edeae9"></div>
<div class="b" style="left:1636.00px;top:1475.00px;width:2.00px;height:72.00px;background:#edeae9"></div>
<div class="b" style="left:1874.00px;top:1475.00px;width:2.00px;height:72.00px;background:#edeae9"></div>
<div class="b" style="left:2112.00px;top:1475.00px;width:2.00px;height:72.00px;background:#edeae9"></div>
<div class="b" style="left:2350.00px;top:1475.00px;width:2.00px;height:72.00px;background:#edeae9"></div>
<svg class="s" style="left:55.00px;top:1501.00px;" width="12" height="21" viewBox="0 0 12 21"><path d="M8 2 V19" stroke="#6d6e6f" stroke-width="2.5"/><path d="M2.8 6.4 L7.6 2.8" stroke="#6d6e6f" stroke-width="2.5" stroke-linecap="round"/></svg>
<svg class="s" style="left:167.00px;top:1494.00px;" width="34" height="34" viewBox="0 0 34 34"><circle cx="17" cy="17" r="14.8" fill="none" stroke="#6d6e6f" stroke-width="2"/><path d="M11 17.8 L15 21.5 L23 13.5" fill="none" stroke="#6d6e6f" stroke-width="2" stroke-linecap="round" stroke-linejoin="round"/></svg>
<div class="t" style="left:220.82px;top:1569.98px;font-size:28.6px;color:#6d6e6f;-webkit-text-stroke:0.2px #6d6e6f;letter-spacing:-0.230px;">Add task...</div>
<div class="t" style="left:218.92px;top:1496.98px;font-size:28.6px;color:#1e1f21;-webkit-text-stroke:0.2px #1e1f21;letter-spacing:-0.425px;">Waseem Rennie</div>
<svg class="s" style="left:1178.00px;top:1487.00px;" width="48" height="48" viewBox="0 0 48 48"><defs><clipPath id="ac6"><circle cx="24" cy="24" r="24"/></clipPath></defs><g clip-path="url(#ac6)"><defs><linearGradient id="hg6" x1="0" y1="0" x2="0" y2="1"><stop offset="0" stop-color="#3e2f28"/><stop offset="1" stop-color="#b89468"/></linearGradient></defs><rect width="48" height="48" fill="#ebe9e8"/><path d="M1 52 C2 42 8 37 17 35.5 L32 35.5 C40 37 46 42 47 52Z" fill="#2352d6"/><path d="M23 4 C31 4 36 9 37 17 C38 26 38 33 37.5 40 L33 46 L28 40 L20 40 L14 48 L10.5 46 C10.5 36 11 26 12 17 C13 9 16 4 23 4Z" fill="url(#hg6)"/><path d="M19.5 30 L29 30 L29.5 38 C27 41 22 41 19.5 38Z" fill="#eec2ab"/><ellipse cx="24.3" cy="20.5" rx="7.6" ry="11" fill="#eec2ab"/><path d="M16 16 C17 9 22 7.5 26 8 C30 8.5 32 11 32.5 15 C30 11 25 10.5 21 12 C18.5 13 17 15 16 16Z" fill="#3e2f28"/><ellipse cx="20.799999999999997" cy="19.5" rx="1.5" ry="0.9" fill="#4a3530" opacity="0.75"/><ellipse cx="28.0" cy="19.5" rx="1.5" ry="0.9" fill="#4a3530" opacity="0.75"/><path d="M18.799999999999997 17.3 Q20.799999999999997 16.3 22.799999999999997 17.3 M26.0 17.3 Q28.0 16.3 30.0 17.3" stroke="#5a4035" stroke-width="0.9" fill="none" opacity="0.6"/><path d="M21.4 25.8 Q24.4 28.1 27.4 25.8 Q24.4 26.9 21.4 25.8Z" fill="#c97a78" opacity="0.9"/><path d="M23.599999999999998 20.5 L23.0 23.5 Q24.4 24.1 25.7 23.5" stroke="#b07a66" stroke-width="0.7" fill="none" opacity="0.5"/></g><circle cx="24" cy="24" r="23.6" fill="none" stroke="#ead8a0" stroke-width="0.9"/></svg>
<div class="t" style="left:1235.02px;top:1500.10px;font-size:24.8px;color:#1e1f21;-webkit-text-stroke:0.2px #1e1f21;letter-spacing:-0.275px;">Hannah Jon...</div>
<div class="t" style="left:1416.82px;top:1500.10px;font-size:24.8px;color:#0d7f56;-webkit-text-stroke:0.2px #0d7f56;letter-spacing:0.057px;">Tomorrow</div>
<div class="b" style="left:1662.00px;top:1487.00px;width:53.00px;height:48.00px;background:#f26c6c;border-radius:8px"></div>
<div class="t" style="left:1670.82px;top:1497.76px;font-size:27.8px;color:#1e1f21;-webkit-text-stroke:0.2px #1e1f21;letter-spacing:-0.900px;">No</div>
<div class="t" style="left:1891.62px;top:1500.10px;font-size:24.8px;color:#1e1f21;-webkit-text-stroke:0.2px #1e1f21;letter-spacing:0.214px;">Creative</div>
<div class="b" style="left:2138.00px;top:1487.00px;width:98.00px;height:48.00px;background:#83c9a9;border-radius:8px"></div>
<div class="t" style="left:2146.82px;top:1497.76px;font-size:27.8px;color:#1e1f21;-webkit-text-stroke:0.2px #1e1f21;letter-spacing:-0.275px;">Phone</div>
<svg class="s" style="left:65.00px;top:1673.00px;" width="22" height="14" viewBox="0 0 22 14"><path d="M1.5 2.2 H20 L10.75 12 Z" fill="#6d6e6f"/></svg>
<div class="t" style="left:112.49px;top:1663.89px;font-size:33.2px;color:#1e1f21;-webkit-text-stroke:0.9px #1e1f21;letter-spacing:-0.613px;">Hired</div>
<svg class="s" style="left:481.00px;top:641.50px;" width="24" height="30" viewBox="0 0 24 30"><path d="M16.3 1.8 L14.5 12.8 L21.8 14.7 L7.6 27.6 L9.6 15.9 L1.6 14.3 Z" fill="#f1bd6c" stroke="#f1bd6c" stroke-width="2.6" stroke-linejoin="round"/></svg>
<svg class="s" style="left:216.00px;top:1665.50px;" width="24" height="30" viewBox="0 0 24 30"><path d="M16.3 1.8 L14.5 12.8 L21.8 14.7 L7.6 27.6 L9.6 15.9 L1.6 14.3 Z" fill="#f1bd6c" stroke="#f1bd6c" stroke-width="2.6" stroke-linejoin="round"/></svg>
</body></html>
